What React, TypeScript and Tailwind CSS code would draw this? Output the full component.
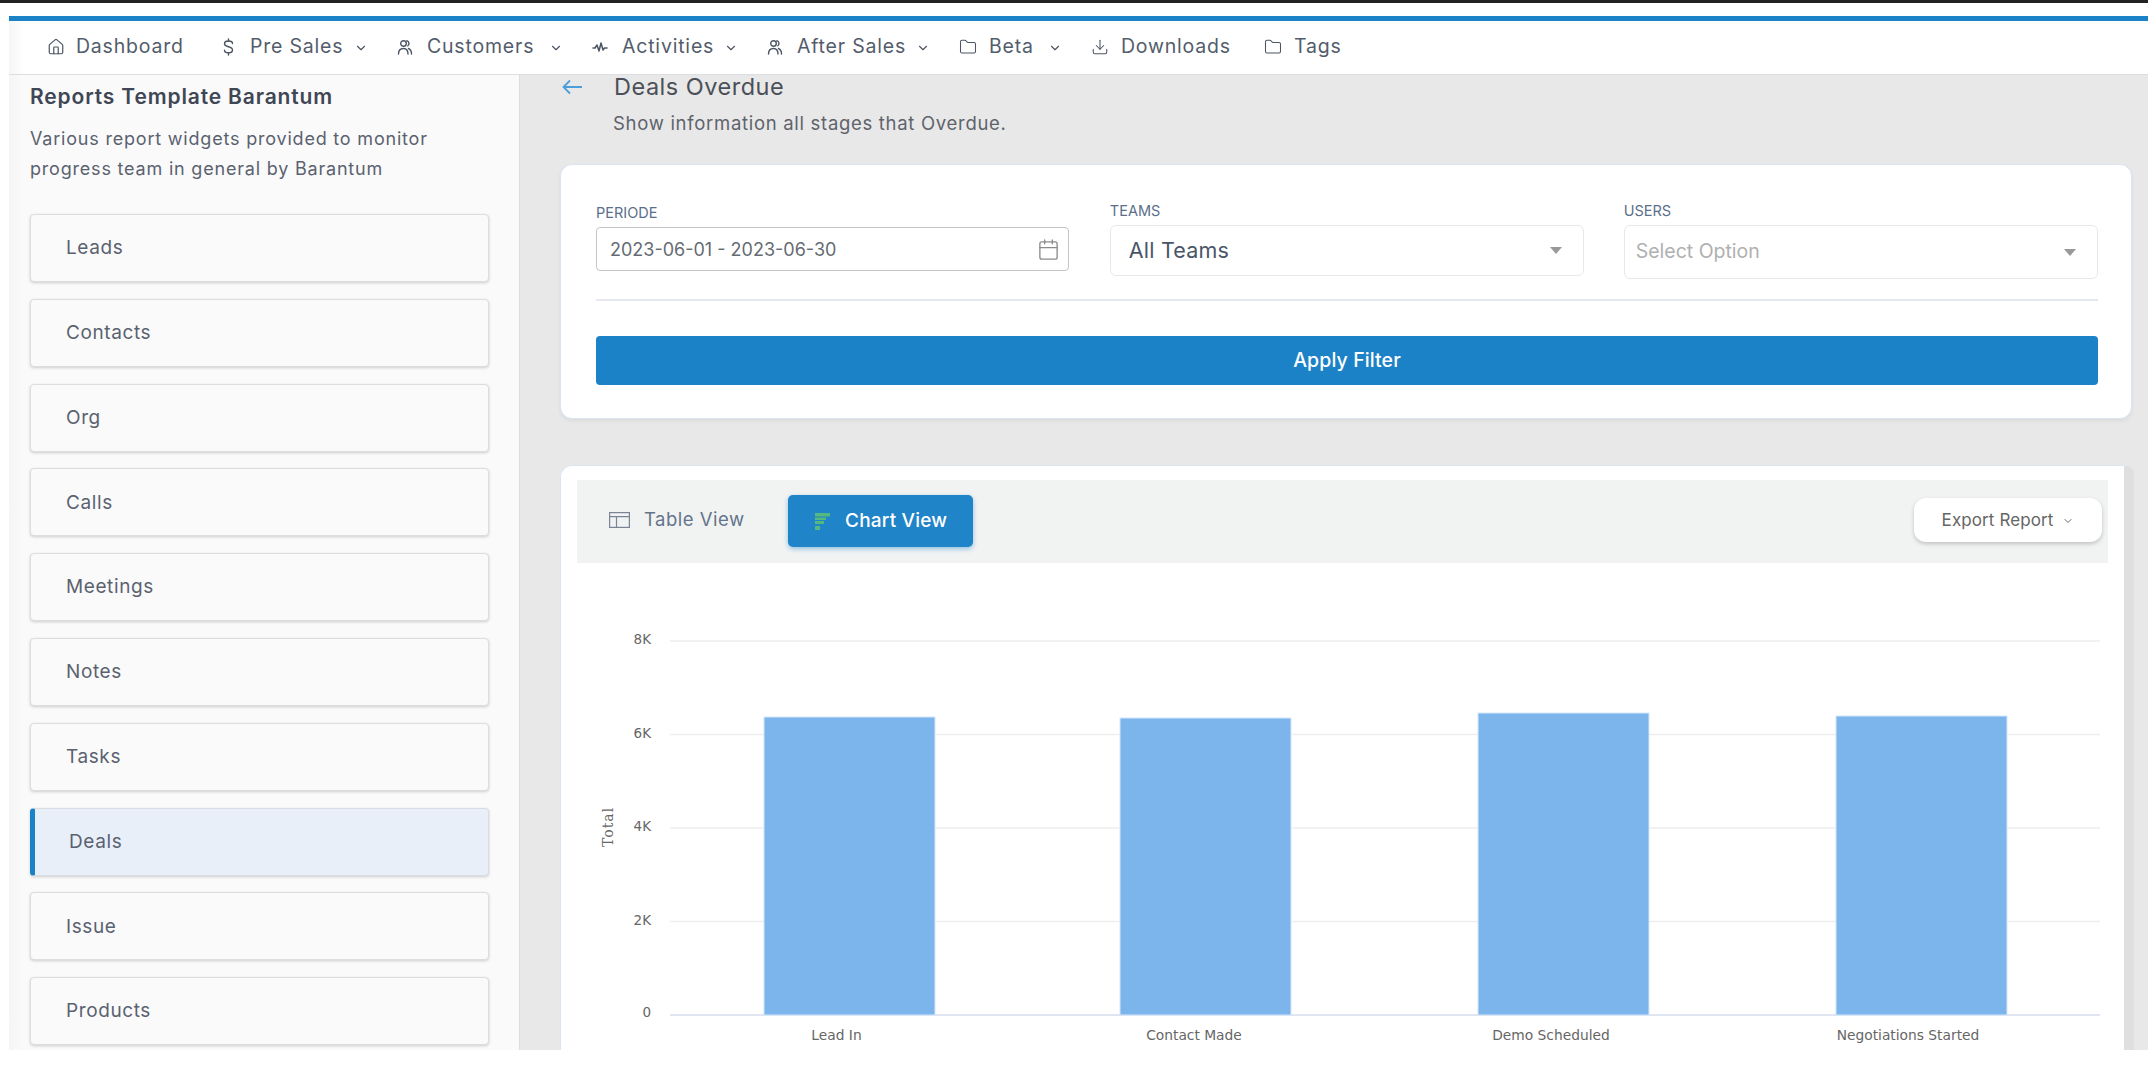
import { ChevronDown, House, Folder, Download, Calendar } from "lucide-react";
import type { ReactNode } from "react";

function DollarIcon() {
  return (
    <svg width="11" height="18" viewBox="0 0 11 18" fill="none" stroke="currentColor" strokeWidth="1.400" strokeLinecap="round">
      <path d="M9.500 5.500C9.500 3.900 7.800 3 5.500 3S1.500 4 1.500 5.700s1.800 2.500 4 3.100 4 1.500 4 3.200-1.800 2.800-4 2.800-4-.9-4-2.600" />
      <path d="M5.500 1v2M5.500 14.800V17" />
    </svg>
  );
}

function PeopleIcon() {
  return (
    <svg width="16" height="16" viewBox="0 0 16 16" fill="none" stroke="currentColor" strokeWidth="1.400" strokeLinecap="round">
      <circle cx="6.500" cy="4.500" r="2.800" />
      <path d="M9.800 1.800a2.800 2.800 0 0 1 1 5" />
      <path d="M1.500 15c0-3.500 1.800-5.500 5-5.500s4.500 2 4.500 5.500" />
      <path d="M11.500 9.500c1.800.7 3 2.700 3 5.500" />
    </svg>
  );
}

function PulseIcon() {
  return (
    <svg width="16" height="14" viewBox="0 0 16 14" fill="none" stroke="currentColor" strokeWidth="1.500" strokeLinecap="round" strokeLinejoin="round">
      <path d="M1 8h2l2-3 2 6 2-8 2 7 1.500-2H15" />
    </svg>
  );
}

function TableIcon() {
  return (
    <svg width="21" height="16" viewBox="0 0 21 16" fill="none" stroke="#7a8496" strokeWidth="1.2">
      <rect x="0.6" y="0.6" width="19.800" height="14.800" />
      <path d="M0.600 4.600h19.800M7.500 4.600v10.800" />
    </svg>
  );
}

function BarsIcon() {
  return (
    <svg width="15" height="17" viewBox="0 0 15 17" fill="#55b87f">
      <rect x="0" y="0" width="15" height="3.500" />
      <rect x="0" y="4.500" width="11" height="2.500" />
      <rect x="0" y="8" width="9" height="3" />
      <rect x="0" y="13" width="5" height="4" />
    </svg>
  );
}

const menu: { label: string; icon: ReactNode; w: string; iconW?: string; caret?: boolean }[] = [
  { label: "Dashboard", icon: <House size={18} strokeWidth={1.6} />, w: "w-[109px] mr-[38px]", iconW: "w-[29px]" },
  { label: "Pre Sales", icon: <DollarIcon />, w: "w-[89px]", iconW: "w-[27px]", caret: true },
  { label: "Customers", icon: <PeopleIcon />, w: "w-[107px]", caret: true },
  { label: "Activities", icon: <PulseIcon />, w: "w-[87px]", caret: true },
  { label: "After Sales", icon: <PeopleIcon />, w: "w-[104px]", caret: true },
  { label: "Beta", icon: <Folder size={18} strokeWidth={1.4} />, w: "w-[44px]", caret: true },
  { label: "Downloads", icon: <Download size={18} strokeWidth={1.4} />, w: "w-[109px] mr-[34px]" },
  { label: "Tags", icon: <Folder size={18} strokeWidth={1.4} />, w: "w-[47px]" },
];

const reports = ["Leads", "Contacts", "Org", "Calls", "Meetings", "Notes", "Tasks", "Deals", "Issue", "Products"];

const ticks = [
  { y: 641, label: "8K" },
  { y: 734.5, label: "6K" },
  { y: 828, label: "4K" },
  { y: 921.5, label: "2K" },
];

const bars = [
  { x: 764, w: 171, top: 717, label: "Lead In", cx: 836.5 },
  { x: 1120, w: 171, top: 718, label: "Contact Made", cx: 1194 },
  { x: 1478, w: 171, top: 713, label: "Demo Scheduled", cx: 1551 },
  { x: 1836, w: 171, top: 716, label: "Negotiations Started", cx: 1908 },
];

function Caret() {
  return <span className="h-0 w-0 border-x-[6.5px] border-t-[7px] border-x-transparent border-t-[#999]" />;
}

export default function App() {
  return (
    <div className="h-[1077px] w-[2148px] overflow-hidden bg-white font-[Inter,sans-serif]">
      <div className="h-[3px] bg-[#222]" />
      <div className="ml-[9px] mt-[13px] flex h-[1034px] flex-col">
        <nav className="flex h-[59px] shrink-0 items-center border-t-[5px] border-b border-t-[#1b82c7] border-b-[#dcdee3] bg-[linear-gradient(90deg,#f6f6f6,#fff_16px)] pb-[2px] pl-[38px] text-[19.500px] tracking-[0.8px] text-[#535c6b]">
          {menu.map((m) => (
            <div key={m.label} className="flex items-center">
              <span className={`flex items-center text-[#4b5563] ${m.iconW ?? "w-[30px]"}`}>{m.icon}</span>
              <span className={`whitespace-nowrap ${m.w}`}>{m.label}</span>
              {m.caret && <ChevronDown size={14} strokeWidth={2} className="ml-[15px] mr-[29px] mt-[3px] text-[#4b5563]" />}
            </div>
          ))}
        </nav>

        <div className="flex min-h-0 flex-1">
          <aside className="w-[511px] shrink-0 overflow-hidden border-r border-[#dddddd] bg-[linear-gradient(90deg,#f5f5f5,#fafafa_14px)] pl-[21px] pr-[30px]">
            <h2 className="mt-[10px] whitespace-nowrap text-[21px] font-semibold leading-[24px] tracking-[0.85px] text-[#3f4654]">Reports Template Barantum</h2>
            <p className="mt-[15px] whitespace-nowrap text-[18px] leading-[30px] tracking-[0.8px] text-[#5a6270]">
              Various report widgets provided to monitor
              <br />
              progress team in general by Barantum
            </p>
            <ul className="mt-[30px] flex flex-col gap-[16.800px]">
              {reports.map((r) =>
                r === "Deals" ? (
                  <li key={r} className="flex h-[68px] items-center rounded-[4px] border border-l-[5px] border-[#d9dde3] border-l-[#1b82c7] bg-[#e8eff9] pl-[34px] pt-[1px] text-[19px] tracking-[0.6px] text-[#5a6270] shadow-[0_1px_3px_rgba(0,0,0,0.18)]">
                    {r}
                  </li>
                ) : (
                  <li key={r} className="flex h-[68px] items-center rounded-[4px] border border-[#dddddd] bg-[#fafafa] pl-[35px] pt-[1px] text-[19px] tracking-[0.6px] text-[#5a6270] shadow-[0_1px_3px_rgba(0,0,0,0.18)]">
                    {r}
                  </li>
                ),
              )}
            </ul>
          </aside>

          <main className="min-w-0 flex-1 bg-[#e8e8e8] pl-[40px] pr-[16px]">
            <div className="flex h-[24px] items-center">
              <svg width="20" height="16" viewBox="0 0 20 16" fill="none" stroke="#4a9fd8" strokeWidth="1.800" className="ml-[2px]">
                <path d="M20 8H1.500M8 1.500 1.500 8 8 14.500" />
              </svg>
              <h1 className="ml-[32px] whitespace-nowrap text-[23.500px] leading-[24px] tracking-[0.5px] text-[#4b5058]">Deals Overdue</h1>
            </div>
            <p className="ml-[53px] mt-[12px] whitespace-nowrap text-[18.500px] leading-[24px] tracking-[0.7px] text-[#5e636b]">Show information all stages that Overdue.</p>

            <section className="mt-[29px] h-[255px] rounded-[12px] border border-[#dbe5f1] bg-white pl-[35px] pr-[33px] pt-[38px] shadow-[0_2px_4px_rgba(0,0,0,0.06)]">
              <div className="grid grid-cols-3 gap-x-[39.500px]">
                <div className="mt-[2px]">
                  <label className="block text-[14.500px] leading-[16px] text-[#5b6f8a]">PERIODE</label>
                  <div className="mt-[6px] flex h-[44px] w-[473px] items-center justify-between rounded-[4px] border border-[#c4c4c4] pl-[13px] pr-[8px] text-[18px] text-[#666b72]">
                    <span>2023-06-01 - 2023-06-30</span>
                    <Calendar size={23} strokeWidth={1.4} className="text-[#8c8c8c]" />
                  </div>
                </div>
                <div>
                  <label className="block text-[14.500px] leading-[16px] text-[#5b6f8a]">TEAMS</label>
                  <div className="mt-[6px] flex h-[51px] items-center justify-between rounded-[6px] border border-[#e8e8e8] pl-[18px] pr-[21px] text-[21.500px] tracking-[0.2px] text-[#4a5568]">
                    <span>All Teams</span>
                    <Caret />
                  </div>
                </div>
                <div>
                  <label className="block text-[14.500px] leading-[16px] text-[#5b6f8a]">USERS</label>
                  <div className="mt-[6px] flex h-[54px] items-center justify-between rounded-[6px] border border-[#e8e8e8] pl-[11px] pr-[21px] text-[19.500px] text-[#b0b0b0]">
                    <span>Select Option</span>
                    <Caret />
                  </div>
                </div>
              </div>
              <div className="mt-[20px] h-[2px] bg-[#e5e8ec]" />
              <button type="button" className="mt-[35px] h-[49px] w-full rounded-[4px] bg-[#1b82c7] text-[19.500px] font-medium tracking-[0.1px] text-white">
                Apply Filter
              </button>
            </section>

            <section className="mt-[46px] flex h-[585px] w-[1574px] rounded-t-[12px] border-l border-t border-[#dbe5f1] bg-white">
              <div className="min-w-0 flex-1 pt-[14px]">
                <div className="ml-[16px] flex h-[83px] w-[1531px] items-center justify-between bg-[#f1f3f3] pb-[3px] pl-[32px] pr-[6px]">
                  <div className="flex items-center">
                    <TableIcon />
                    <span className="ml-[14px] w-[100px] whitespace-nowrap text-[18.500px] tracking-[0.5px] text-[#64748b]">Table View</span>
                    <button type="button" className="ml-[44px] mt-[2px] flex h-[52px] w-[185px] items-center rounded-[5px] bg-[#1f84c8] pl-[27px] text-[19px] font-medium tracking-[0.2px] text-white shadow-[0_2px_5px_rgba(31,132,200,0.45)]">
                      <BarsIcon />
                      <span className="ml-[15px]">Chart View</span>
                    </button>
                  </div>
                  <button type="button" className="flex h-[44px] w-[188px] items-center justify-center rounded-[12px] bg-white pt-[2px] text-[17px] tracking-[0.1px] text-[#666666] shadow-[0_2px_4px_rgba(0,0,0,0.2)]">
                    Export Report
                    <ChevronDown size={12} strokeWidth={2} className="ml-[9px]" />
                  </button>
                </div>
                <svg width="1563" height="487" viewBox="561 563 1563 487" className="block">
                  {ticks.map((t) => (
                    <g key={t.label}>
                      <line x1="670" x2="2100" y1={t.y} y2={t.y} stroke="#eeeeee" strokeWidth="1.500" />
                      <text x="651" y={t.y + 3} textAnchor="end" fontSize="13.500" fill="#666666" fontFamily="DejaVu Sans, sans-serif">
                        {t.label}
                      </text>
                    </g>
                  ))}
                  <line x1="670" x2="2100" y1="1015" y2="1015" stroke="#dfe5f1" strokeWidth="2" />
                  <text x="651" y="1017" textAnchor="end" fontSize="13.500" fill="#666666" fontFamily="DejaVu Sans, sans-serif">
                    0
                  </text>
                  <text x="0" y="0" transform="translate(613 847) rotate(-90)" fontSize="14" letterSpacing="1" fill="#666666" fontFamily="DejaVu Serif, serif">
                    Total
                  </text>
                  {bars.map((b) => (
                    <g key={b.label}>
                      <rect x={b.x} y={b.top} width={b.w} height={1015 - b.top} fill="#7cb4ec" stroke="#d6e8fa" strokeWidth="1" />
                      <text x={b.cx} y="1040" textAnchor="middle" fontSize="13.800" fill="#666666" fontFamily="DejaVu Sans, sans-serif">
                        {b.label}
                      </text>
                    </g>
                  ))}
                </svg>
              </div>
              <div className="w-[10px] rounded-tr-[8px] bg-[#dfdfdf]" />
            </section>
          </main>
        </div>
      </div>
    </div>
  );
}
